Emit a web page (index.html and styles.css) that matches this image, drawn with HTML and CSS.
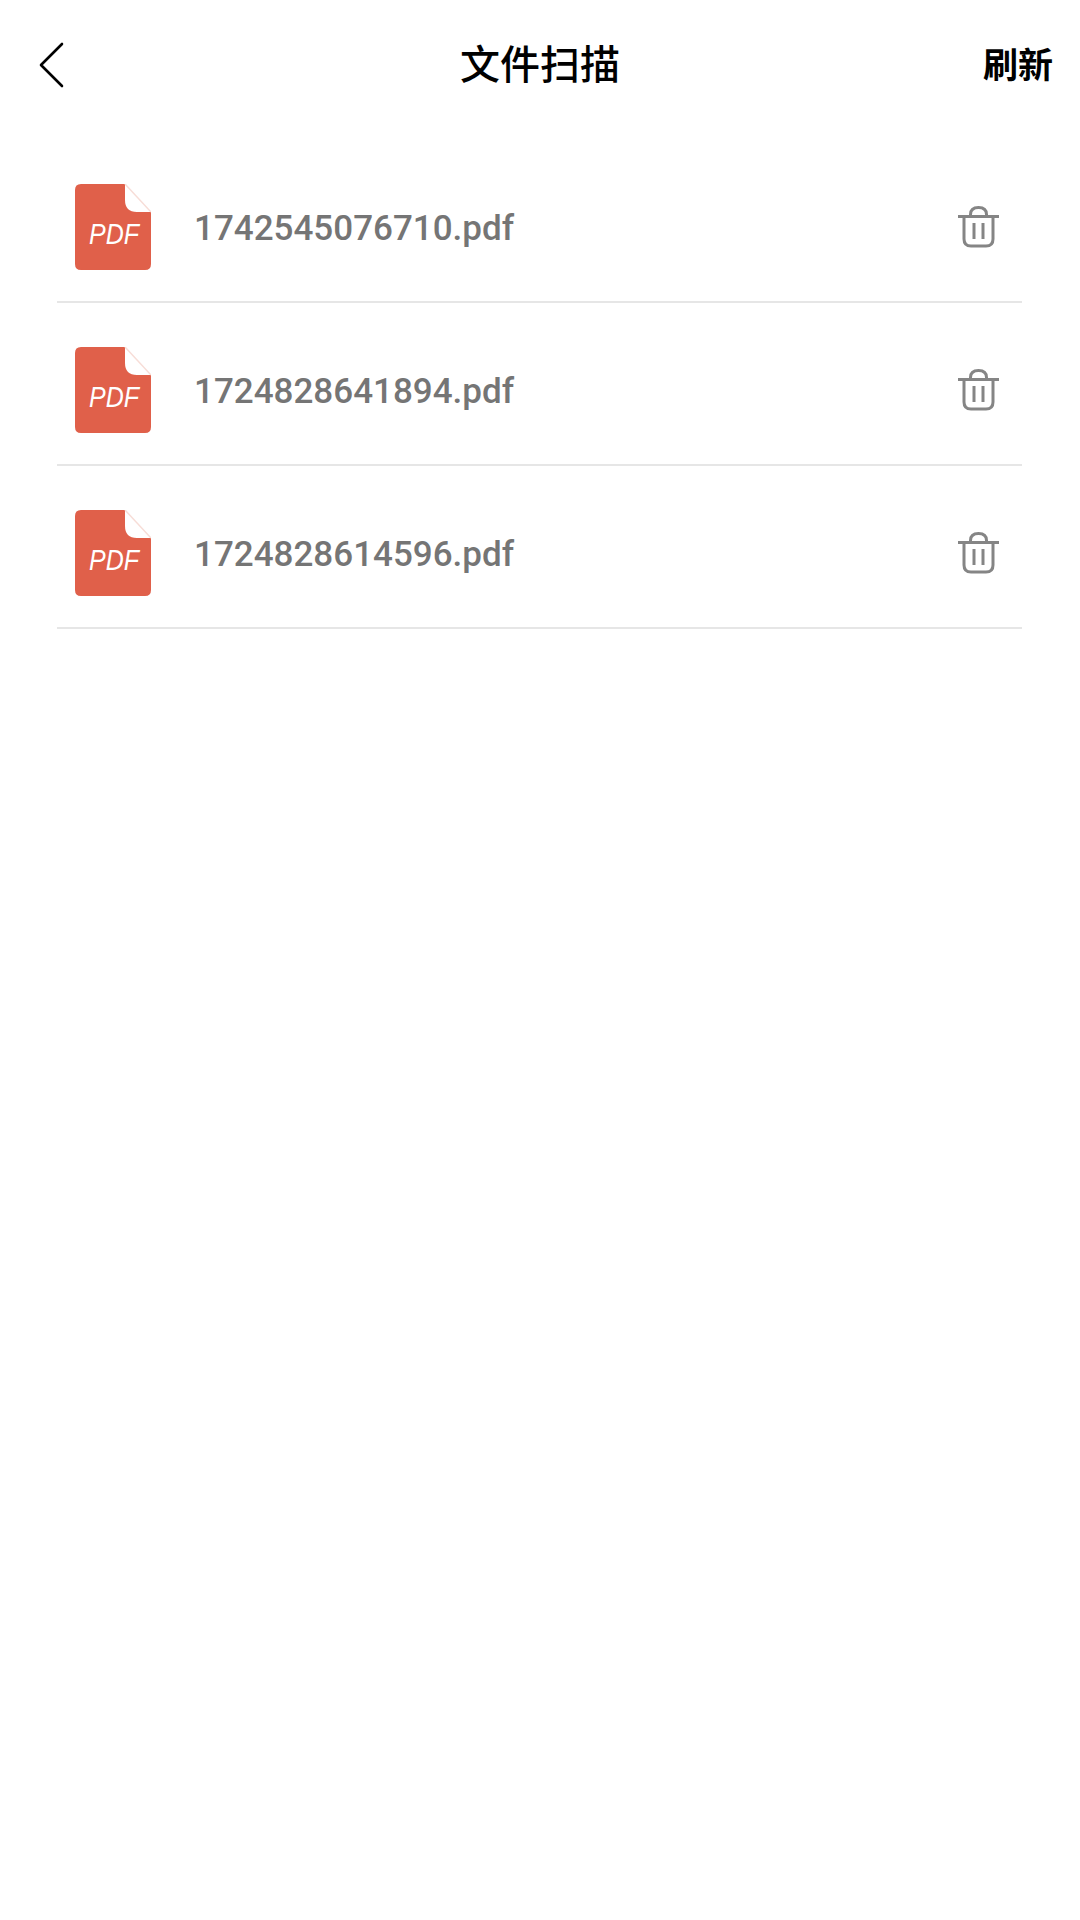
FILE: index.html
```html
<!DOCTYPE html>
<html lang="zh-CN">
<head>
    <meta charset="UTF-8">
    <meta name="viewport" content="width=device-width, initial-scale=1.0">
    <title>文件扫描</title>
    <link rel="stylesheet" href="styles.css">
</head>
<body>
    <header class="topbar">
        <svg class="back" width="30" height="48" viewBox="0 0 30 48">
            <path d="M25 3 L4 24 L25 45" fill="none" stroke="#000" stroke-width="2.6" stroke-linecap="round" stroke-linejoin="round"/>
        </svg>
        <h1>文件扫描</h1>
        <span class="refresh">刷新</span>
    </header>

    <ul class="file-list">
        <li class="file-row">
            <div class="pdf-icon">
                <svg width="76" height="86" viewBox="0 0 76 86">
                    <path d="M6 0 H50 V16 Q50 28 62 28 H76 V80 Q76 86 70 86 H6 Q0 86 0 80 V6 Q0 0 6 0 Z" fill="#e0604a"/>
                    <path d="M50 0 L76 28" stroke="#f7ddd7" stroke-width="1.5"/>
                </svg>
                <span class="pdf-label">PDF</span>
            </div>
            <span class="file-name">1742545076710.pdf</span>
            <svg class="trash" width="44" height="44" viewBox="0 0 44 44">
                <path d="M1 11.5 H42 M13.5 11 V9.500 Q13.500 2.500 21.500 2.500 Q29.500 2.500 29.500 9.500 V11 M7 12 V34 Q7 41 14 41 H29 Q36 41 36 34 V12 M17 18 V34 M26 18 V34" fill="none" stroke="#858585" stroke-width="3"/>
            </svg>
        </li>
        <li class="file-row">
            <div class="pdf-icon">
                <svg width="76" height="86" viewBox="0 0 76 86">
                    <path d="M6 0 H50 V16 Q50 28 62 28 H76 V80 Q76 86 70 86 H6 Q0 86 0 80 V6 Q0 0 6 0 Z" fill="#e0604a"/>
                    <path d="M50 0 L76 28" stroke="#f7ddd7" stroke-width="1.5"/>
                </svg>
                <span class="pdf-label">PDF</span>
            </div>
            <span class="file-name">1724828641894.pdf</span>
            <svg class="trash" width="44" height="44" viewBox="0 0 44 44">
                <path d="M1 11.5 H42 M13.5 11 V9.500 Q13.500 2.500 21.500 2.500 Q29.500 2.500 29.500 9.500 V11 M7 12 V34 Q7 41 14 41 H29 Q36 41 36 34 V12 M17 18 V34 M26 18 V34" fill="none" stroke="#858585" stroke-width="3"/>
            </svg>
        </li>
        <li class="file-row">
            <div class="pdf-icon">
                <svg width="76" height="86" viewBox="0 0 76 86">
                    <path d="M6 0 H50 V16 Q50 28 62 28 H76 V80 Q76 86 70 86 H6 Q0 86 0 80 V6 Q0 0 6 0 Z" fill="#e0604a"/>
                    <path d="M50 0 L76 28" stroke="#f7ddd7" stroke-width="1.5"/>
                </svg>
                <span class="pdf-label">PDF</span>
            </div>
            <span class="file-name">1724828614596.pdf</span>
            <svg class="trash" width="44" height="44" viewBox="0 0 44 44">
                <path d="M1 11.5 H42 M13.5 11 V9.500 Q13.500 2.500 21.500 2.500 Q29.500 2.500 29.500 9.500 V11 M7 12 V34 Q7 41 14 41 H29 Q36 41 36 34 V12 M17 18 V34 M26 18 V34" fill="none" stroke="#858585" stroke-width="3"/>
            </svg>
        </li>
    </ul>
</body>
</html>
```

FILE: styles.css
```css
* {
    box-sizing: border-box;
}
body {
    margin: 0;
    min-height: 1920px;
    background-color: #fff;
    font-family: Roboto, "Noto Sans CJK SC", sans-serif;
}
.topbar {
    display: flex;
    align-items: center;
    justify-content: space-between;
    height: 124px;
    padding: 0 27px 0 37px;
    position: relative;
}
.back {
    margin-top: 6px;
}
.topbar h1 {
    position: absolute;
    left: 0;
    right: 0;
    margin: 0;
    font-size: 40px;
    font-weight: 500;
    color: #000;
    text-align: center;
}
.refresh {
    font-size: 35px;
    font-weight: 700;
    color: #000;
}
.file-list {
    list-style: none;
    margin: 16px 58px 0 57px;
    padding: 0;
}
.file-row {
    display: flex;
    align-items: center;
    height: 163px;
    padding: 12px 21px 0 18px;
    border-bottom: 2px solid #e6e6e6;
}
.pdf-icon {
    position: relative;
    width: 76px;
    height: 86px;
    flex-shrink: 0;
}
.pdf-icon svg {
    display: block;
}
.pdf-label {
    position: absolute;
    left: 14px;
    top: 33px;
    font-family: "Liberation Sans", sans-serif;
    font-size: 29px;
    line-height: 34px;
    font-style: italic;
    color: #fff;
    transform: scaleX(0.86);
    transform-origin: left center;
}
.file-name {
    flex: 1;
    margin: 4px 0 0 43px;
    font-size: 35px;
    font-weight: 500;
    color: #757575;
}
```
